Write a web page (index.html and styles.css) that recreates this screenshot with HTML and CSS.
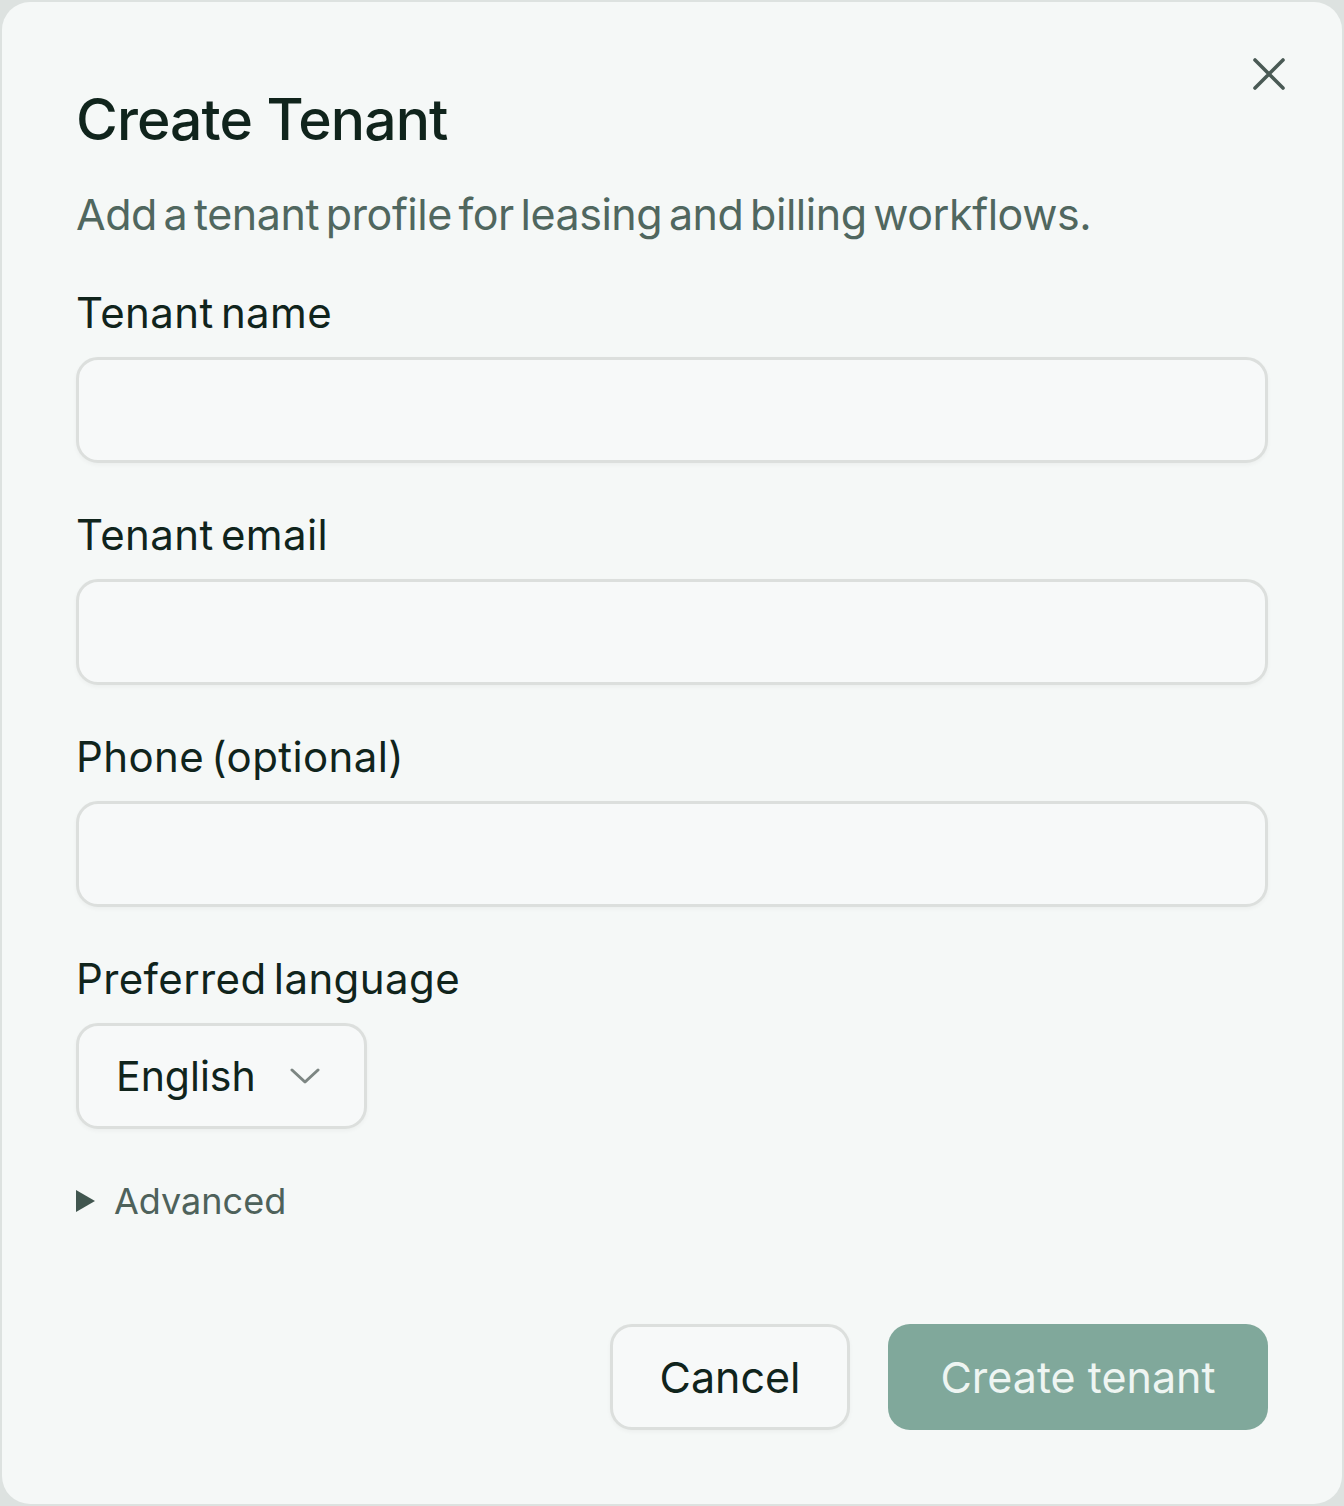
FILE: index.html
```html
<!DOCTYPE html>
<html lang="en">
<head>
	<meta charset="UTF-8">
	<title>Create Tenant</title>
	<link rel="stylesheet" href="styles.css">
</head>
<body>
	<div class="dialog">
		<button class="close" aria-label="Close">
			<svg width="34" height="34" viewBox="0 0 34 34"><path d="M3 3 L31 31 M31 3 L3 31" stroke="#4a5a55" stroke-width="3.6" stroke-linecap="round" fill="none"/></svg>
		</button>

		<h1 class="title">Create Tenant</h1>
		<p class="sub">Add a tenant profile for leasing and billing workflows.</p>

		<div class="field first">
			<label class="label">Tenant name</label>
			<input class="input" type="text">
		</div>

		<div class="field">
			<label class="label">Tenant email</label>
			<input class="input" type="email">
		</div>

		<div class="field">
			<label class="label">Phone (optional)</label>
			<input class="input" type="tel">
		</div>

		<div class="field">
			<label class="label">Preferred language</label>
			<div class="select">
				<span>English</span>
				<svg width="30" height="18" viewBox="0 0 30 18"><path d="M2 3 L15 15 L28 3" stroke="#7d8683" stroke-width="3" fill="none" stroke-linecap="round" stroke-linejoin="round"/></svg>
			</div>
		</div>

		<div class="advanced">
			<span class="tri"></span>
			<span>Advanced</span>
		</div>

		<div class="actions">
			<button class="btn btn-cancel">Cancel</button>
			<button class="btn btn-create">Create tenant</button>
		</div>
	</div>
</body>
</html>
```

FILE: styles.css
```css
html, body{
	margin: 0;
	padding: 0;
}

body{
	background: #dde2e0;
	font-family: Inter, "Noto Sans", sans-serif;
	color: #10241c;
}

.dialog{
	position: relative;
	box-sizing: border-box;
	margin: 2px;
	height: 1502px;
	background: #f5f8f7;
	border-radius: 28px;
	padding: 82px 74px 0 74px;
}

.close{
	position: absolute;
	top: 55px;
	right: 56px;
	background: none;
	border: 0;
	padding: 0;
	width: 34px;
	height: 34px;
}

.title{
	margin: 0;
	font-size: 57px;
	font-weight: 500;
	line-height: 72px;
	letter-spacing: -0.9px;
}

.sub{
	margin: 30px 0 0 0;
	font-size: 43px;
	line-height: 56px;
	color: #50675f;
	letter-spacing: -0.45px;
	word-spacing: -5px;
}

.field{
	margin-top: 44px;
}

.field.first{
	margin-top: 43px;
}

.label{
	display: block;
	font-size: 42px;
	line-height: 56px;
	letter-spacing: 0.4px;
	word-spacing: -5px;
	color: #10241c;
}

.input{
	display: block;
	box-sizing: border-box;
	width: 100%;
	height: 106px;
	margin-top: 16px;
	background: #f7f9f9;
	border: 3px solid #dcdfdd;
	border-radius: 22px;
	box-shadow: 0 2px 4px rgba(0, 0, 0, 0.04);
	outline: none;
}

.select{
	display: inline-flex;
	align-items: center;
	gap: 34px;
	box-sizing: border-box;
	height: 106px;
	margin-top: 16px;
	padding: 0 44px 0 37px;
	background: #f7f9f9;
	border: 3px solid #dcdfdd;
	border-radius: 22px;
	box-shadow: 0 2px 4px rgba(0, 0, 0, 0.04);
	font-size: 41px;
}

.advanced{
	display: flex;
	align-items: center;
	gap: 19px;
	margin-top: 50px;
	font-size: 36px;
	color: #4e625b;
}

.tri{
	width: 0;
	height: 0;
	border-top: 11px solid transparent;
	border-bottom: 11px solid transparent;
	border-left: 19px solid #41564f;
}

.actions{
	display: flex;
	justify-content: flex-end;
	gap: 38px;
	margin-top: 101px;
}

.btn{
	height: 106px;
	border-radius: 22px;
	font-family: Inter, "Noto Sans", sans-serif;
	font-size: 43px;
}

.btn-cancel{
	width: 240px;
	background: #f7f9f9;
	border: 3px solid #dcdfdd;
	color: #10241c;
	box-shadow: 0 2px 4px rgba(0, 0, 0, 0.04);
}

.btn-create{
	width: 380px;
	background: #80a89b;
	border: 0;
	color: #eef5f2;
}
```
